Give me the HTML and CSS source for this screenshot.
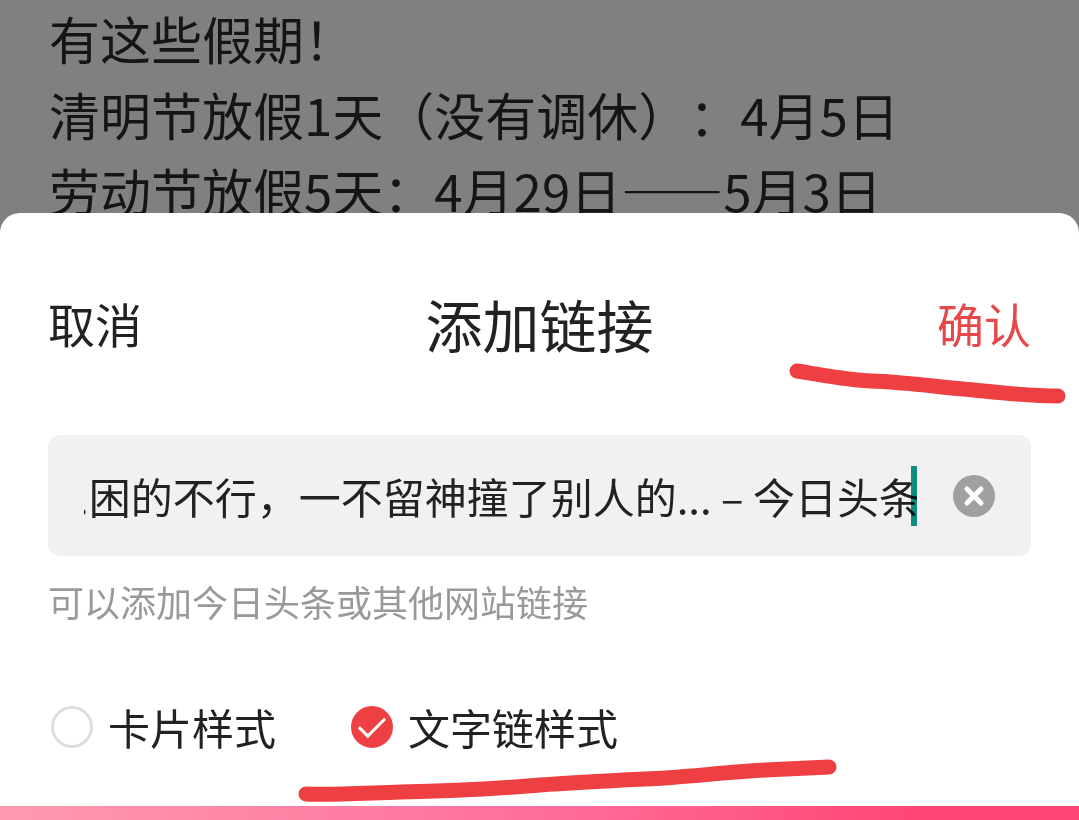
FILE: index.html
```html
<!DOCTYPE html>
<html lang="zh-CN">
<head>
<meta charset="utf-8">
<title>添加链接</title>
<link rel="stylesheet" href="styles.css">
</head>
<body>

<div class="article">
    <p>有这些假期！</p>
    <p>清明节放假1天（没有调休）：4月5日</p>
    <p>劳动节放假5天：4月29日——5月3日</p>
</div>

<form class="sheet" action="#" method="post">
    <div class="head">
        <button type="button" class="cancel">取消</button>
        <h1>添加链接</h1>
        <button type="submit" class="ok">确认</button>
        <svg class="mark mark_ok" width="279" height="50" viewBox="0 0 279 50">
            <path d="M10 13C36 17 60 22 84 23C116 24 144 28 176 31C208 34 238 38 271 38"/>
        </svg>
    </div>

    <div class="field">
        <input type="text" name="link" id="link" aria-labelledby="hint" value=".困的不行，一不留神撞了别人的... – 今日头条">
        <span class="caret"></span>
        <button type="button" class="clear" aria-label="清除">
            <svg width="42" height="42" viewBox="0 0 42 42">
                <circle cx="21" cy="21" r="21"/>
                <path d="M14 14L28 28M28 14L14 28"/>
            </svg>
        </button>
    </div>
    <label class="hint" id="hint" for="link">可以添加今日头条或其他网站链接</label>

    <div class="options">
        <label><input type="radio" name="style" value="card">卡片样式</label>
        <label><input type="radio" name="style" value="text" checked>文字链样式</label>
        <svg class="mark mark_text" width="550" height="50" viewBox="0 0 550 50">
            <path d="M16 37C42 38 76 36 110 35C165 34 215 31 250 28C290 25 335 23 375 21C415 18 440 15 475 13C500 12 520 11 539 10"/>
        </svg>
    </div>
</form>

<div class="bar"></div>

</body>
</html>
```
FILE: styles.css
```css
* {box-sizing:border-box;}
body {margin:0; min-height:100vh; display:flex; flex-direction:column; background:#808080; color:#222; font-family:"Noto Sans CJK SC", sans-serif; text-spacing-trim:space-all;}
button, input {font-family:inherit; color:inherit; border:0; padding:0; background:none;}
button {cursor:pointer;}

.article {padding:0 49px; color:#151515; font-size:51px; line-height:76px;}
.article p {margin:0;}

.sheet {position:relative; flex:1; margin-top:-15px; padding:65px 48px 47px; background:#fff; border-radius:20px 20px 0 0;}
.head {position:relative; display:flex; justify-content:space-between; align-items:center; margin-bottom:67px; line-height:90px;}
.head button {font-size:47px; line-height:90px;}
.head h1 {margin:0; font-size:57px; font-weight:400;}
.head .ok {color:#e6484b;}

.field {display:flex; align-items:center; height:121px; padding:0 36px; background:#f1f1f1; border-radius:12px;}
.field input {flex:1; min-width:0; height:60px; font-size:42px; text-indent:-7px; outline:0; text-spacing-trim:space-all;}
.caret {position:relative; width:6px; height:60px; margin-left:-6px; margin-right:36px; background:#0f9482; mix-blend-mode:multiply;}
.clear {width:42px; height:42px;}
.clear svg {display:block; fill:#9fa1a0;}
.clear path {stroke:#fff; stroke-width:5; stroke-linecap:round;}

.hint {display:block; margin-top:21px; font-size:36px; line-height:48px; color:#999;}

.options {position:relative; display:flex; gap:72px; margin-top:72px; font-size:42px; line-height:60px;}
.options label {display:flex; align-items:center; gap:15px;}
.options input {appearance:none; display:grid; place-items:center; width:42px; height:42px; margin:0 0 0 3px; border:3px solid #ddd; border-radius:50%;}
.options input:checked {border-color:#ee4043; background:#ee4043;}
.options input:checked::before {content:""; width:11px; height:23px; margin-bottom:7px; border:solid #fff; border-width:0 3px 3px 0; transform:rotate(45deg);}

/* red pen lines over the sheet */
.mark {position:absolute; fill:none; stroke:#ee4043; stroke-width:15; stroke-linecap:round; pointer-events:none;}
.mark_ok {right:-35px; top:80px;}
.mark_text {left:242px; top:60px;}

.bar {height:14px; background:linear-gradient(100deg, #ff9ab2, #ff6f9b 50%, #ff4676 85%);}
```
